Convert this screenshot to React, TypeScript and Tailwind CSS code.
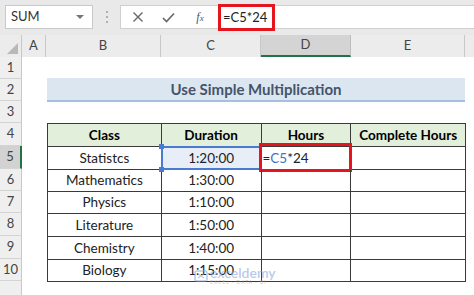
import React from "react";

const COLS = [
  { key: "A", w: 24 },
  { key: "B", w: 115 },
  { key: "C", w: 100 },
  { key: "D", w: 90 },
  { key: "E", w: 114 },
];

const ROW_H = [22, 22, 22, 23, 23, 22, 22, 23, 23, 22];

const data = [
  ["Statistcs", "1:20:00"],
  ["Mathematics", "1:30:00"],
  ["Physics", "1:10:00"],
  ["Literature", "1:50:00"],
  ["Chemistry", "1:40:00"],
  ["Biology", "1:15:00"],
];

const font = { fontFamily: "Lato, 'Open Sans', 'Liberation Sans', sans-serif" };

function RowHeader({ n, h, active }: { n: number; h: number; active?: boolean }) {
  return (
    <div
      className={
        "w-[22px] shrink-0 flex items-center justify-center text-[13px] text-[#444] border-b border-[#d4d4d4] " +
        (active ? "bg-[#d2d2d2] border-r-2 border-r-[#217346]" : "bg-[#efefef] border-r border-r-[#c8c8c8]")
      }
      style={{ height: h }}
    >
      {n}
    </div>
  );
}

export default function App() {
  return (
    <div className="w-[474px] h-[295px] overflow-hidden bg-white relative" style={font}>
      {/* formula bar */}
      <div className="h-[35px] bg-[#e9e9e9] flex items-start pt-[5px] relative">
        <div className="ml-[5px] w-[88px] h-[24px] bg-white border border-[#c9c9c9] flex items-center pl-[5px] text-[13px] text-[#333]">
          <span className="flex-1">SUM</span>
          <svg width="8" height="5" viewBox="0 0 8 5" className="mr-[8px]">
            <path d="M0 0 L8 0 L4 4 Z" fill="#777" />
          </svg>
        </div>
        <div className="w-[27px] h-[24px] flex flex-col items-center justify-center gap-[3px]">
          <div className="w-[2px] h-[2px] bg-[#b0b0b0]" />
          <div className="w-[2px] h-[2px] bg-[#b0b0b0]" />
          <div className="w-[2px] h-[2px] bg-[#b0b0b0]" />
        </div>
        <div className="flex-1 h-[24px] bg-white border-y border-l border-[#d0d0d0] flex items-center relative">
          <div className="w-[30px] flex justify-center ml-[2px]">
            <svg width="12" height="12" viewBox="0 0 12 12">
              <path d="M1.5 1.5 L10.5 10.5 M10.5 1.5 L1.5 10.5" stroke="#666" strokeWidth="1.4" />
            </svg>
          </div>
          <div className="w-[30px] flex justify-center">
            <svg width="13" height="11" viewBox="0 0 13 11">
              <path d="M1 6 L4.5 9.5 L12 1.5" stroke="#666" strokeWidth="1.6" fill="none" />
            </svg>
          </div>
          <div className="w-[34px] flex justify-center text-[12px] italic text-[#555]" style={{ fontFamily: "'Liberation Serif', serif" }}>
            f<span className="text-[9px] mt-[4px]">x</span>
          </div>
        </div>
        <div className="absolute left-[218px] top-[4px] w-[57px] h-[27px] border-[3px] border-[#e4151c] flex items-center pl-[2px] text-[13px] text-[#222]">
          =C5*24
        </div>
      </div>

      {/* column header row */}
      <div className="flex h-[22px] bg-[#ececec]">
        <div className="w-[22px] shrink-0 relative border-r border-[#c8c8c8]">
          <svg width="11" height="11" viewBox="0 0 11 11" className="absolute right-[3px] bottom-[3px]">
            <path d="M11 0 L11 11 L0 11 Z" fill="#b8b8b8" />
          </svg>
        </div>
        {COLS.map((c) => (
          <div
            key={c.key}
            className={
              "shrink-0 flex items-center justify-center text-[13px] text-[#444] " +
              (c.key === "D"
                ? "bg-[#d4d4d4] border-b-2 border-[#217346] border-r border-r-[#bdbdbd]"
                : "border-r border-[#c8c8c8]")
            }
            style={{ width: c.w }}
          >
            {c.key}
          </div>
        ))}
        <div className="flex-1" />
      </div>

      {/* grid body */}
      <div className="flex">
        <div className="flex flex-col">
          {ROW_H.map((h, i) => (
            <RowHeader key={i} n={i + 1} h={h} active={i === 4} />
          ))}
          <div className="w-[22px] h-[20px] bg-[#efefef] border-r border-[#c8c8c8]" />
        </div>
        <div className="flex flex-col">
          {/* row 1 */}
          <div style={{ height: ROW_H[0] }} />
          {/* row 2: title band */}
          <div className="flex" style={{ height: ROW_H[1] }}>
            <div className="w-[25px]" />
            <div className="w-[418px] -mt-[1px] h-[24px] bg-[#dce6f1] border-b-2 border-[#a6bfdd] flex items-center justify-center text-[15px] font-bold text-[#44546a]">
              Use Simple Multiplication
            </div>
          </div>
          {/* row 3 */}
          <div style={{ height: ROW_H[2] }} />
          {/* table */}
          <div className="ml-[25px] w-[419px] border-l border-t border-[#3a3a3a] text-[13.5px] text-[#222]">
            <div className="flex bg-[#e2efda] font-bold text-black" style={{ height: ROW_H[3] }}>
              <div className="w-[114px] border-r border-b border-[#3a3a3a] flex items-center justify-center">Class</div>
              <div className="w-[100px] border-r border-b border-[#3a3a3a] flex items-center justify-center">Duration</div>
              <div className="w-[90px] border-r border-b border-[#3a3a3a] flex items-center justify-center">Hours</div>
              <div className="w-[115px] border-r border-b border-[#3a3a3a] flex items-center justify-center">Complete Hours</div>
            </div>
            {data.map((r, i) => (
              <div key={i} className="flex" style={{ height: ROW_H[4 + i] }}>
                <div className="w-[114px] border-r border-b border-[#3a3a3a] flex items-center justify-center">{r[0]}</div>
                <div
                  className={
                    "w-[100px] border-r border-b border-[#3a3a3a] flex items-center justify-center relative " +
                    (i === 0 ? "bg-[#e8eef8]" : "")
                  }
                >
                  {r[1]}
                  {i === 0 && (
                    <>
                      <div className="absolute -left-[1px] -top-[1px] -right-[1px] -bottom-[1px] border-2 border-[#4a7bd0]" />
                      <div className="absolute -left-[3px] -top-[3px] w-[5px] h-[5px] bg-[#4a7bd0]" />
                      <div className="absolute -left-[3px] -bottom-[3px] w-[5px] h-[5px] bg-[#4a7bd0]" />
                    </>
                  )}
                </div>
                <div className="w-[90px] border-r border-b border-[#3a3a3a] flex items-center relative">
                  {i === 0 && (
                    <>
                      <span className="pl-[1px]">
                        =<span className="text-[#4472c4]">C5</span>*24
                      </span>
                      <div className="absolute -left-[3px] -top-[4px] -right-[2px] -bottom-[3px] border-[3px] border-[#e4151c]" />
                    </>
                  )}
                </div>
                <div className="w-[115px] border-r border-b border-[#3a3a3a]" />
              </div>
            ))}
          </div>
        </div>
      </div>

      {/* watermark */}
      <div className="absolute left-[194px] top-[266px] flex items-center gap-[2px] opacity-60 pointer-events-none">
        <svg width="14" height="14" viewBox="0 0 14 14">
          <rect x="1" y="2" width="12" height="10" rx="2" fill="none" stroke="#8fa7dc" strokeWidth="1.5" />
          <path d="M4 5 L10 9 M10 5 L4 9" stroke="#8fa7dc" strokeWidth="1.3" />
        </svg>
        <div className="flex flex-col leading-none">
          <span className="text-[14px] text-[#8fa7dc] font-semibold">exceldemy</span>
          <span className="text-[5px] text-[#9aa] tracking-[1px]">EXCEL · DATA · BI</span>
        </div>
      </div>
    </div>
  );
}
